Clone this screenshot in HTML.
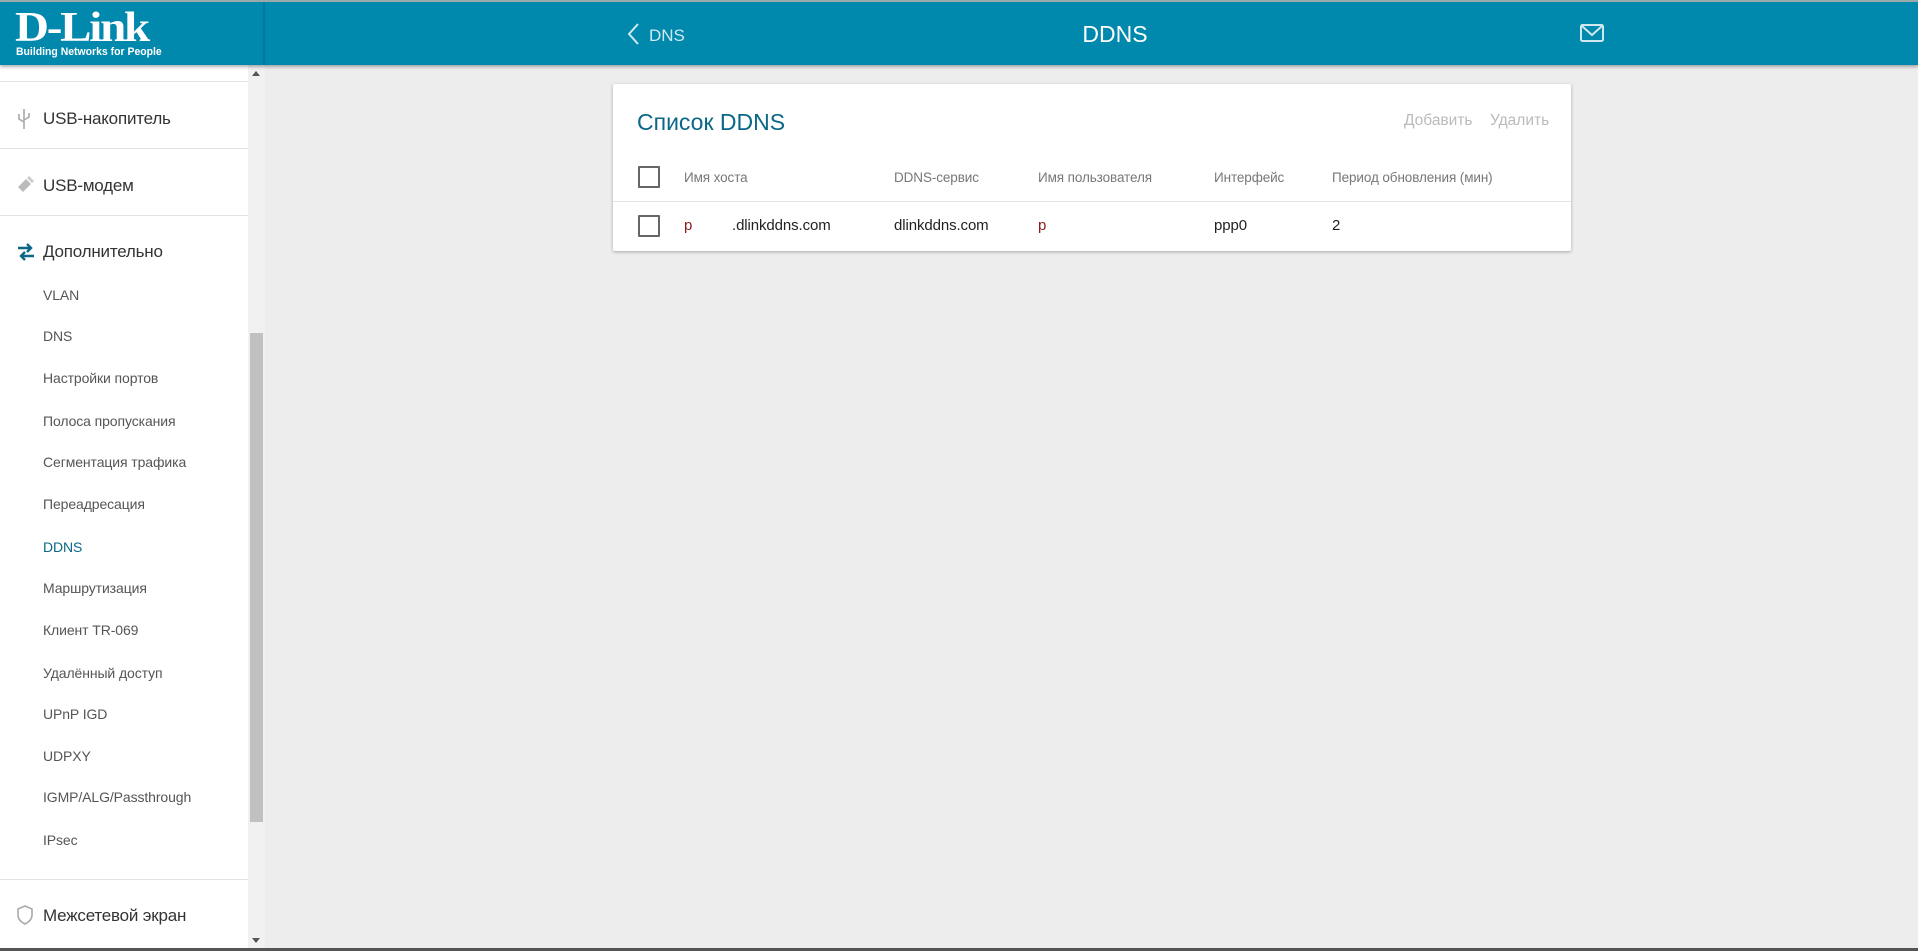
<!DOCTYPE html>
<html><head><meta charset="utf-8"><style>
*{margin:0;padding:0;box-sizing:border-box}
body{width:1918px;height:951px;background:#ededed;font-family:"Liberation Sans",sans-serif;position:relative;overflow:hidden;color:#333}
.hdr{position:absolute;left:0;top:0;width:1918px;height:65px;background:#0088ad;border-top:2px solid #9aa;box-shadow:0 2px 3px rgba(0,0,0,.3);z-index:2}
.logo{position:absolute;left:0;top:0;width:265px;height:63px;border-right:2px solid #007a9c}
.logo .b{position:absolute;left:15px;top:2px;color:#fff;font-family:"Liberation Serif",serif;font-weight:bold;font-size:42px;letter-spacing:-2px;transform:scaleX(1.12);transform-origin:left}
.logo .s{position:absolute;left:16px;top:44px;color:#fff;font-weight:bold;font-size:11px;transform:scaleX(.95);transform-origin:left}
.back{position:absolute;left:627px;top:20px;color:#cfe9f1;font-size:17px}
.title{position:absolute;left:0;width:2230px;top:19px;text-align:center;color:#fff;font-size:23px}
.side{position:absolute;left:0;top:65px;width:248px;height:883px;background:#fff}
.sb{position:absolute;left:248px;top:65px;width:17px;height:883px;background:#f1f1f1}
.thumb{position:absolute;left:250px;top:333px;width:13px;height:489px;background:#c1c1c1}
.line{position:absolute;left:0;width:248px;height:1px;background:#e3e3e3}
.mi{position:absolute;left:43px;font-size:17px;color:#333;letter-spacing:-0.2px}
.si{position:absolute;left:43px;font-size:14px;color:#555;letter-spacing:-0.1px}
.card{position:absolute;left:613px;top:84px;width:958px;height:167px;background:#fff;border-radius:2px;box-shadow:0 1px 3px rgba(0,0,0,.3)}
.ct{position:absolute;left:24px;top:25px;font-size:23px;color:#0a6787}
.act{position:absolute;top:28px;font-size:15.5px;color:#bbb}
.cb{position:absolute;left:25px;width:22px;height:22px;border:2px solid #666;border-radius:1px}
.th{position:absolute;top:86px;font-size:13.5px;color:#777;letter-spacing:-0.1px}
.td{position:absolute;top:133px;font-size:15px;color:#222;letter-spacing:-0.1px}
.bot{position:absolute;left:0;top:948px;width:1918px;height:3px;background:#555}
</style></head><body>
<div class="hdr">
 <div class="logo"><div class="b">D-Link</div><div class="s">Building Networks for People</div></div>
 <div class="back"><svg width="14" height="24" viewBox="0 0 14 24" style="vertical-align:-5px;margin-right:8px"><path d="M11 2L2 12l9 10" stroke="#cfe9f1" stroke-width="2" fill="none"/></svg>DNS</div>
 <div class="title">DDNS</div>
 <svg style="position:absolute;left:1580px;top:22px" width="24" height="18" viewBox="0 0 24 18"><rect x="1" y="1" width="22" height="16" rx="1.5" stroke="#cfe9f1" stroke-width="2" fill="none"/><path d="M2 2l10 9 10-9" stroke="#cfe9f1" stroke-width="2" fill="none"/></svg>
</div>
<div class="side">
 <div class="line" style="top:16px"></div>
 <div class="line" style="top:83px"></div>
 <div class="line" style="top:150px"></div>
 <div class="line" style="top:814px"></div>
 <svg style="position:absolute;left:17px;top:43px" width="14" height="22" viewBox="0 0 14 22"><path d="M7 1v20M2 6v5l5 3M12 5v4l-5 3" stroke="#aaa" stroke-width="1.6" fill="none"/></svg>
 <div class="mi" style="top:44px">USB-накопитель</div>
 <svg style="position:absolute;left:15px;top:110px" width="20" height="20" viewBox="0 0 20 20"><path d="M3 12l8-8 5 5-8 8z" fill="#bbb"/><path d="M12 3l2-2 5 5-2 2z" fill="#ccc"/></svg>
 <div class="mi" style="top:111px">USB-модем</div>
 <svg style="position:absolute;left:17px;top:178px" width="18" height="18" viewBox="0 0 18 18"><path d="M1 5h13M10 1l4 4-4 4M17 13H4M8 9l-4 4 4 4" stroke="#0a6787" stroke-width="2.4" fill="none"/></svg>
 <div class="mi" style="top:177px">Дополнительно</div>
 <div class="si" style="top:222px">VLAN</div>
 <div class="si" style="top:263px">DNS</div>
 <div class="si" style="top:305px">Настройки портов</div>
 <div class="si" style="top:348px">Полоса пропускания</div>
 <div class="si" style="top:389px">Сегментация трафика</div>
 <div class="si" style="top:431px">Переадресация</div>
 <div class="si" style="top:474px;color:#0a6787">DDNS</div>
 <div class="si" style="top:515px">Маршрутизация</div>
 <div class="si" style="top:557px">Клиент TR-069</div>
 <div class="si" style="top:600px">Удалённый доступ</div>
 <div class="si" style="top:641px">UPnP IGD</div>
 <div class="si" style="top:683px">UDPXY</div>
 <div class="si" style="top:724px">IGMP/ALG/Passthrough</div>
 <div class="si" style="top:767px">IPsec</div>
 <svg style="position:absolute;left:16px;top:840px" width="18" height="20" viewBox="0 0 18 20"><path d="M9 1l7 3v6c0 4-3 7-7 9-4-2-7-5-7-9V4z" stroke="#aaa" stroke-width="1.6" fill="none"/></svg>
 <div class="mi" style="top:841px">Межсетевой экран</div>
</div>
<div class="sb"></div><div class="thumb"></div>
<div style="position:absolute;left:252px;top:71px;width:0;height:0;border-left:4px solid transparent;border-right:4px solid transparent;border-bottom:5px solid #555"></div>
<div style="position:absolute;left:252px;top:938px;width:0;height:0;border-left:4px solid transparent;border-right:4px solid transparent;border-top:5px solid #555"></div>
<div class="card">
 <div class="ct">Список DDNS</div>
 <div class="act" style="left:791px">Добавить</div>
 <div class="act" style="left:877px">Удалить</div>
 <div class="cb" style="top:82px"></div>
 <div class="th" style="left:71px">Имя хоста</div>
 <div class="th" style="left:281px">DDNS-сервис</div>
 <div class="th" style="left:425px">Имя пользователя</div>
 <div class="th" style="left:601px">Интерфейс</div>
 <div class="th" style="left:719px">Период обновления (мин)</div>
 <div style="position:absolute;left:0;top:117px;width:958px;height:1px;background:#e3e3e3"></div>
 <div class="cb" style="top:131px"></div>
 <div class="td" style="left:71px;color:#8a1b1b">p</div>
 <div class="td" style="left:119px">.dlinkddns.com</div>
 <div class="td" style="left:281px">dlinkddns.com</div>
 <div class="td" style="left:425px;color:#8a1b1b">p</div>
 <div class="td" style="left:601px">ppp0</div>
 <div class="td" style="left:719px">2</div>
</div>
<div class="bot"></div>
</body></html>
